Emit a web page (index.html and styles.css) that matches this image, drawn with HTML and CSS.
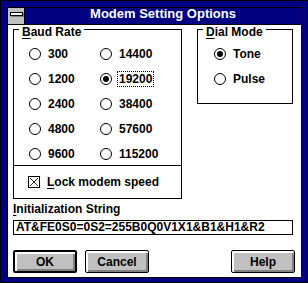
FILE: index.html
```html
<!DOCTYPE html>
<html lang="en">
<head>
    <title>Modem Setting Options</title>
    <link rel="stylesheet" href="styles.css">
</head>
<body>
    <div class="window">
        <div class="frame">
            <div class="titlebar">
                <div class="sysmenu"><span class="sysbar"></span></div>
                <div class="title">Modem Setting Options</div>
            </div>

            <div class="client">
                <div class="top-row">
                    <div class="group baud">
                        <span class="group-label"><u>B</u>aud Rate</span>
                        <div class="radio-grid">
                            <div class="option"><span class="radio"></span>300</div>
                            <div class="option"><span class="radio"></span>14400</div>
                            <div class="option"><span class="radio"></span>1200</div>
                            <div class="option"><span class="radio on"></span><span class="focus">19200</span></div>
                            <div class="option"><span class="radio"></span>2400</div>
                            <div class="option"><span class="radio"></span>38400</div>
                            <div class="option"><span class="radio"></span>4800</div>
                            <div class="option"><span class="radio"></span>57600</div>
                            <div class="option"><span class="radio"></span>9600</div>
                            <div class="option"><span class="radio"></span>115200</div>
                        </div>
                        <div class="lock-row">
                            <span class="checkbox">
                                <svg width="12" height="12" viewBox="0 0 12 12">
                                    <path d="M1 1 L11 11 M11 1 L1 11" stroke="#000" stroke-width="1" shape-rendering="crispEdges"/>
                                </svg>
                            </span>
                            <span><u>L</u>ock modem speed</span>
                        </div>
                    </div>

                    <div class="group dial">
                        <span class="group-label"><u>D</u>ial Mode</span>
                        <div class="radio-grid single">
                            <div class="option"><span class="radio on"></span>Tone</div>
                            <div class="option"><span class="radio"></span>Pulse</div>
                        </div>
                    </div>
                </div>

                <div class="field-label"><u>I</u>nitialization String</div>
                <div class="edit">AT&amp;FE0S0=0S2=255B0Q0V1X1&amp;B1&amp;H1&amp;R2</div>

                <div class="buttons">
                    <div class="btn default">OK</div>
                    <div class="btn">Cancel</div>
                    <div class="btn help">Help</div>
                </div>
            </div>
        </div>
    </div>
</body>
</html>
```

FILE: styles.css
```css
body {
    margin: 0;
    font-family: "Liberation Sans", Arial, sans-serif;
    font-weight: bold;
    font-size: 12px;
    color: #000;
}
.window {
    width: 308px;
    height: 283px;
    box-sizing: border-box;
    border: 1px solid #000;
    background-color: #000080;
    padding: 6px 5px 4px 6px;
}
.frame {
    height: 100%;
    box-sizing: border-box;
    border: 1px solid #000;
    background-color: #fff;
    display: flex;
    flex-direction: column;
}
.titlebar {
    flex: none;
    height: 16px;
    display: flex;
    background-color: #000080;
    border-bottom: 1px solid #000;
}
.sysmenu {
    width: 17px;
    height: 16px;
    background-color: #c0c0c0;
    border-right: 1px solid #000;
    display: flex;
    justify-content: center;
    padding-top: 4px;
    box-sizing: border-box;
}
.sysbar {
    width: 11px;
    height: 2px;
    background-color: #fff;
    border: 1px solid #000;
    box-shadow: 1px 1px #808080;
}
.title {
    flex: 1;
    color: #fff;
    font-size: 13px;
    line-height: 12px;
    text-align: center;
}
.client {
    flex: 1;
    padding: 4px 8px 0 5px;
    display: flex;
    flex-direction: column;
}
.top-row {
    display: flex;
    gap: 15px;
    align-items: flex-start;
}
.group {
    position: relative;
    border: 1px solid #000;
    box-sizing: border-box;
}
.baud {
    width: 169px;
}
.dial {
    width: 96px;
    height: 75px;
}
.group-label {
    position: absolute;
    top: -5px;
    left: 5px;
    background-color: #fff;
    padding: 0 3px;
    line-height: 14px;
    white-space: nowrap;
}
.radio-grid {
    display: grid;
    grid-template-columns: 71px auto;
    grid-auto-rows: 22px;
    row-gap: 3px;
    padding: 13px 0 0 15px;
}
.radio-grid.single {
    grid-template-columns: auto;
    padding-left: 16px;
}
.option {
    display: flex;
    align-items: center;
    gap: 7px;
    line-height: 14px;
}
.radio {
    width: 12px;
    height: 12px;
    box-sizing: border-box;
    border: 1px solid #000;
    border-radius: 50%;
    display: flex;
    align-items: center;
    justify-content: center;
    flex: none;
}
.radio.on::after {
    content: "";
    width: 6px;
    height: 6px;
    border-radius: 50%;
    background-color: #000;
}
.focus {
    outline: 1px dotted #000;
    padding: 0 1px;
    margin-left: -1px;
}
.lock-row {
    border-top: 1px solid #000;
    height: 32px;
    padding-left: 14px;
    display: flex;
    align-items: center;
    gap: 7px;
    line-height: 14px;
}
.checkbox {
    width: 12px;
    height: 12px;
    box-sizing: border-box;
    border: 1px solid #000;
    display: flex;
    flex: none;
}
.checkbox svg {
    width: 10px;
    height: 10px;
}
u {
    text-decoration-thickness: 1px;
    text-underline-offset: 2px;
}
.field-label {
    margin-top: 3px;
    line-height: 14px;
}
.edit {
    margin-top: 4px;
    width: 280px;
    height: 15px;
    box-sizing: border-box;
    border: 1px solid #000;
    padding-left: 2px;
    line-height: 13px;
    white-space: nowrap;
    overflow: hidden;
}
.buttons {
    margin-top: 15px;
    display: flex;
    gap: 8px;
    margin-right: -2px;
}
.btn {
    width: 64px;
    height: 23px;
    box-sizing: border-box;
    border: 1px solid #000;
    border-radius: 2px;
    background-color: #c0c0c0;
    box-shadow: inset 2px 2px #fff, inset -2px -2px #808080;
    display: flex;
    align-items: center;
    justify-content: center;
    padding-top: 1px;
}
.btn.default {
    border-width: 2px;
}
.btn.help {
    margin-left: auto;
}
```
